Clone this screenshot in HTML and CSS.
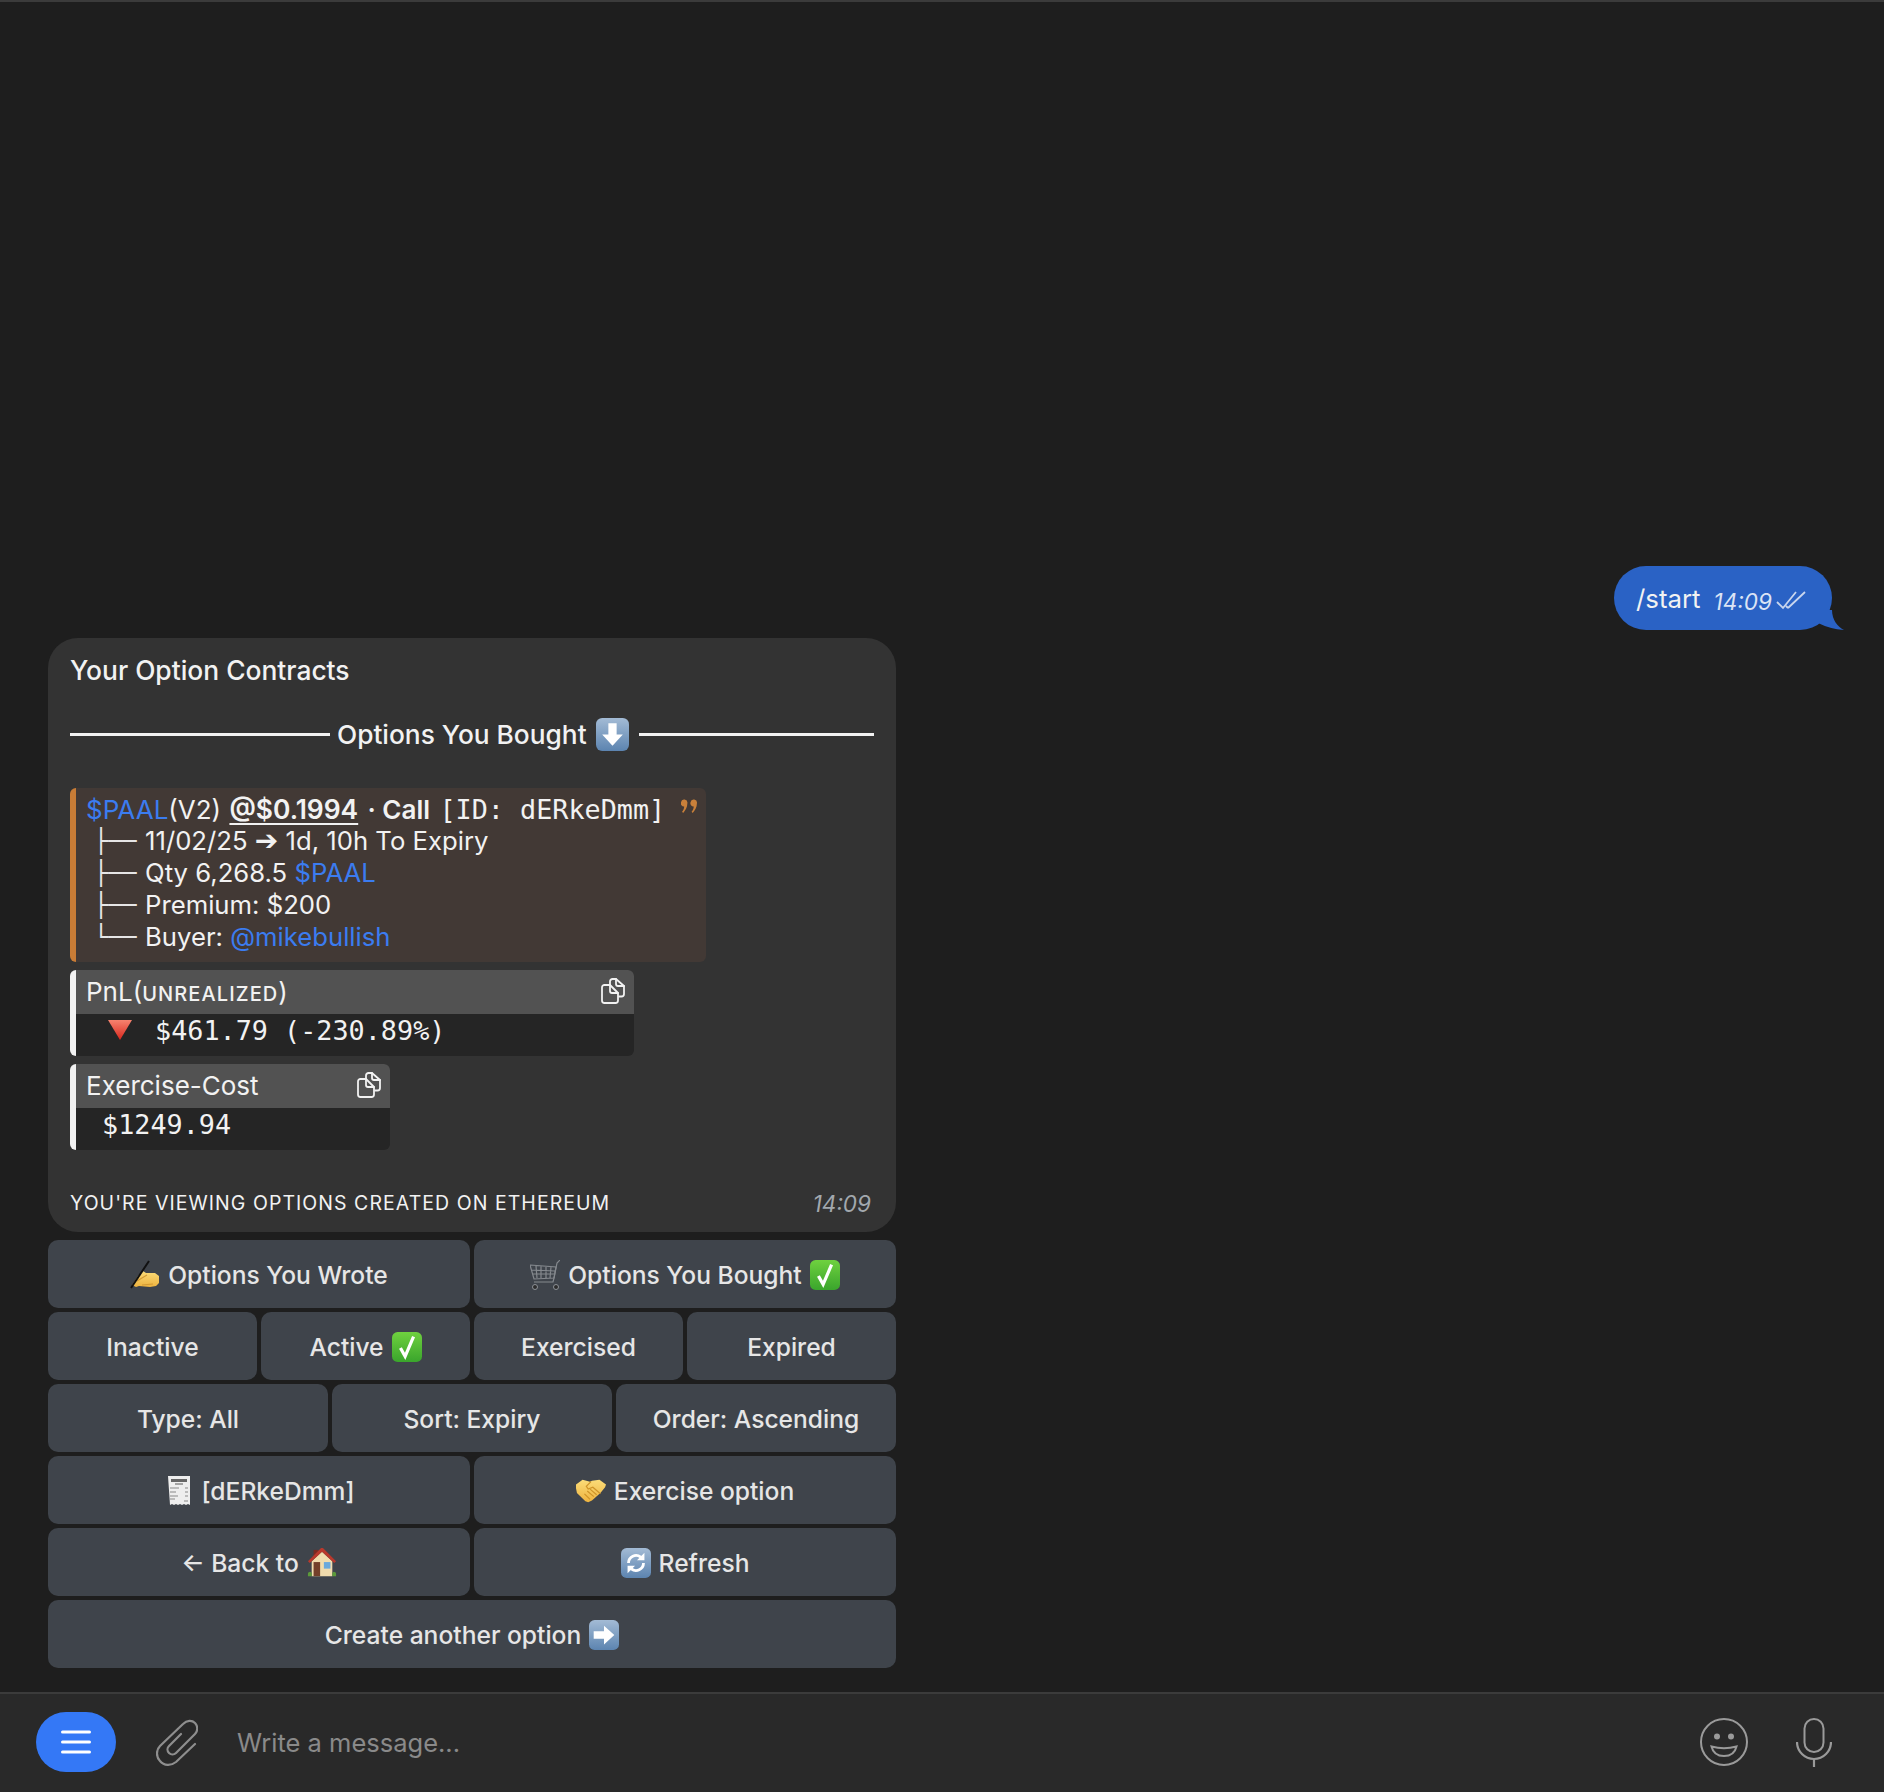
FILE: index.html
```html
<!DOCTYPE html>
<html lang="en">
<head>
    <meta charset="UTF-8">
    <title>Your Option Contracts</title>
    <link rel="stylesheet" href="styles.css">
</head>
<body>
    <svg class="sprite" width="0" height="0">
        <defs>
            <linearGradient id="keycap" x1="0" y1="0" x2="0" y2="1">
                <stop offset="0" stop-color="#a3bbd5"/>
                <stop offset="1" stop-color="#5c84b0"/>
            </linearGradient>
            <linearGradient id="green" x1="0" y1="0" x2="0" y2="1">
                <stop offset="0" stop-color="#6fd13f"/>
                <stop offset="1" stop-color="#3aa52c"/>
            </linearGradient>
            <linearGradient id="red" x1="0" y1="0" x2="0" y2="1">
                <stop offset="0" stop-color="#f6836f"/>
                <stop offset="1" stop-color="#d8261c"/>
            </linearGradient>
            <linearGradient id="skin" x1="0" y1="0" x2="0" y2="1">
                <stop offset="0" stop-color="#fbdc78"/>
                <stop offset="1" stop-color="#eeb33f"/>
            </linearGradient>
            <symbol id="e-down" viewBox="0 0 32 32">
                <rect width="32" height="32" rx="6" fill="url(#keycap)"/>
                <path d="M12 5h8v11h6L16 27 6 16h6z" fill="#fff"/>
            </symbol>
            <symbol id="e-right" viewBox="0 0 32 32">
                <rect width="32" height="32" rx="6" fill="url(#keycap)"/>
                <path d="M5 12h11V6l11 10-11 10v-6H5z" fill="#fff"/>
            </symbol>
            <symbol id="e-refresh" viewBox="0 0 32 32">
                <rect width="32" height="32" rx="6" fill="url(#keycap)"/>
                <path d="M8 16a8 8 0 0 1 13-6.200M24 16a8 8 0 0 1-13 6.200" fill="none" stroke="#fff" stroke-width="3"/>
                <path d="M25 5v8h-8zM7 27v-8h8z" fill="#fff"/>
            </symbol>
            <symbol id="e-check" viewBox="0 0 32 32">
                <rect width="32" height="32" rx="6" fill="url(#green)"/>
                <path d="M9 17l5 9L23 5" fill="none" stroke="#fff" stroke-width="3.400"/>
            </symbol>
            <symbol id="e-hand" viewBox="0 0 30 30">
                <path d="M2 25l6-9 5-5 3 2 9 0 4 3 0 7-3 3-6 1-11-1-3 1z" fill="url(#skin)"/>
                <path d="M7 21l10-6M12 25l11-1" fill="none" stroke="#d39a34" stroke-width="1.200"/>
                <path d="M1 28L19 1" fill="none" stroke="#111" stroke-width="2"/>
            </symbol>
            <symbol id="e-cart" viewBox="0 0 30 30">
                <g fill="none" stroke="#85898e" stroke-width="1.200">
                    <path d="M30 0l-3 3-3 15-1 4H4"/>
                    <path d="M0 5l26 2-2 11-20 1zM6 6l1 12M11 6v12M16 7v11M21 7l-1 11M1 10l24 1M2 14l22 0"/>
                </g>
                <circle cx="5" cy="27" r="2.500" fill="#2d2d2d" stroke="#8d9196"/>
                <circle cx="26" cy="27" r="2.500" fill="#2d2d2d" stroke="#8d9196"/>
            </symbol>
            <symbol id="e-receipt" viewBox="0 0 30 30">
                <path d="M4 0h22v29l-2-1-2 1-2-1-2 1-2-1-2 1-2-1-2 1-2-1-2 1z" fill="#eeeeee"/>
                <path d="M7 3h16v3H7z" fill="#666"/>
                <path d="M11 8h8" stroke="#888" stroke-width="1.500"/>
                <path d="M6 12h9M21 12h3M6 16h6M21 16h3M6 20h8M21 20h3M6 23h5M20 25h4" stroke="#888" stroke-width="1.200"/>
            </symbol>
            <symbol id="e-shake" viewBox="0 0 32 24">
                <path d="M0 5L7 0l8 2 2-1 8-1 7 5-1 3-5 6-9 8-4 2-3-1-9-9-1-5z" fill="url(#skin)"/>
                <path d="M16 2l-5 5 2 3 5-2 8 7M9 15l6 6M12 12l7 6M15 10l7 6" fill="none" stroke="#cf9428" stroke-width="1.300"/>
            </symbol>
            <symbol id="e-house" viewBox="0 0 30 32">
                <path d="M6 2h5v8H6z" fill="#7a2a22"/>
                <path d="M4 14L15 4l11 10v16H4z" fill="#f1dcae"/>
                <path d="M0 14L14 0h2l14 14-2 2L15 4 2 16z" fill="#b9382c"/>
                <path d="M6 15h7v15H6z" fill="#74402a"/>
                <path d="M17 15h7v7h-7z" fill="#6aa9dc"/>
                <path d="M0 28a2 2 0 0 1 4-1v3H0zM26 27a2 2 0 0 1 4 1v2h-4z" fill="#5c9a3a"/>
            </symbol>
            <symbol id="copy" viewBox="0 0 24 26">
                <g fill="none" stroke="#f2f2f2" stroke-width="1.800" stroke-linejoin="round" stroke-linecap="round">
                    <path d="M9 7V3.500A2.500 2.500 0 0 1 11.500 1H15l8 7v8a2.500 2.500 0 0 1-2.500 2.500H18"/>
                    <path d="M15 1v5a2 2 0 0 0 2 2h6"/>
                    <path d="M3.500 7H9l8 8v7.500a2.500 2.500 0 0 1-2.500 2.500h-11A2.500 2.500 0 0 1 1 22.500v-13A2.500 2.500 0 0 1 3.500 7z"/>
                    <path d="M9 7v6a2 2 0 0 0 2 2h6"/>
                </g>
            </symbol>
        </defs>
    </svg>

    <main class="chat">
        <div class="out-msg">
            <span class="out-text">/start</span>
            <span class="out-time">14:09</span>
            <svg class="ticks" viewBox="0 0 30 20">
                <path d="M1 12l6 6L20 2M12 18L29 2M10 16l2 2" fill="none" stroke="#c9d6ee" stroke-width="1.800"/>
            </svg>
            <svg class="tail" viewBox="0 0 30 20"><path d="M4 13Q16 19 30 20C24 17 18 10 18 0L4 0Z" fill="#2a62c5"/></svg>
        </div>

        <div class="in-msg">
            <div class="line title">Your Option Contracts</div>
            <div class="divider">
                <span class="rule rule-left"></span>
                <span class="divider-label">Options You Bought</span>
                <svg class="emoji-big"><use href="#e-down"/></svg>
                <span class="rule"></span>
            </div>

            <blockquote class="quote">
                <div class="line"><span class="link">$PAAL</span>(V2) <strong class="price">@$0.1994</strong> <strong class="call">· Call</strong> <code class="quote-id">[ID: dERkeDmm]</code></div>
                <div class="line tree"><span class="branch">├──</span>11/02/25 <strong class="arrow">➔</strong> 1d, 10h To Expiry</div>
                <div class="line tree"><span class="branch">├──</span>Qty 6,268.5&nbsp;<span class="link">$PAAL</span></div>
                <div class="line tree"><span class="branch">├──</span>Premium: $200</div>
                <div class="line tree"><span class="branch">└──</span>Buyer:&nbsp;<span class="link">@mikebullish</span></div>
                <svg class="quote-mark" viewBox="0 0 16 14"><path d="M0 3a3 3 0 1 1 6 1c0 4-2 7-4 9l-1-1c1-1 2-3 2-5a3 3 0 0 1-3-4zM9 3a3 3 0 1 1 6 1c0 4-2 7-4 9l-1-1c1-1 2-3 2-5a3 3 0 0 1-3-4z" fill="#c9803a"/></svg>
            </blockquote>

            <section class="pre pre-pnl">
                <header class="pre-head">
                    <span>PnL(<span class="smallcaps">unrealized</span>)</span>
                    <svg class="copy-icon"><use href="#copy"/></svg>
                </header>
                <div class="pre-body">
                    <svg class="tri" viewBox="0 0 24 20"><path d="M0 0h24L12 20z" fill="url(#red)"/></svg>
                    <code>$461.79 (-230.89%)</code>
                </div>
            </section>

            <section class="pre pre-cost">
                <header class="pre-head">
                    <span>Exercise-Cost</span>
                    <svg class="copy-icon"><use href="#copy"/></svg>
                </header>
                <div class="pre-body"><code>$1249.94</code></div>
            </section>

            <div class="msg-foot">
                <span class="foot-note">YOU'RE VIEWING OPTIONS CREATED ON ETHEREUM</span>
                <span class="in-time">14:09</span>
            </div>
        </div>

        <div class="keyboard">
            <div class="kb-row">
                <button class="kb-btn"><svg class="emoji"><use href="#e-hand"/></svg>Options You Wrote</button>
                <button class="kb-btn"><svg class="emoji"><use href="#e-cart"/></svg>Options You Bought<svg class="emoji"><use href="#e-check"/></svg></button>
            </div>
            <div class="kb-row">
                <button class="kb-btn">Inactive</button>
                <button class="kb-btn">Active<svg class="emoji"><use href="#e-check"/></svg></button>
                <button class="kb-btn">Exercised</button>
                <button class="kb-btn">Expired</button>
            </div>
            <div class="kb-row">
                <button class="kb-btn">Type: All</button>
                <button class="kb-btn">Sort: Expiry</button>
                <button class="kb-btn">Order: Ascending</button>
            </div>
            <div class="kb-row">
                <button class="kb-btn"><svg class="emoji"><use href="#e-receipt"/></svg>[dERkeDmm]</button>
                <button class="kb-btn"><svg class="emoji"><use href="#e-shake"/></svg>Exercise option</button>
            </div>
            <div class="kb-row">
                <button class="kb-btn">← Back to<svg class="emoji"><use href="#e-house"/></svg></button>
                <button class="kb-btn"><svg class="emoji"><use href="#e-refresh"/></svg>Refresh</button>
            </div>
            <div class="kb-row">
                <button class="kb-btn">Create another option<svg class="emoji"><use href="#e-right"/></svg></button>
            </div>
        </div>
    </main>

    <footer class="composer">
        <button class="menu-btn">
            <svg width="30" height="24" viewBox="0 0 30 24"><path d="M1.500 2h27M1.500 12h27M1.500 22h27" stroke="#fff" stroke-width="3" stroke-linecap="round"/></svg>
        </button>
        <svg class="clip" width="42" height="47" viewBox="0 0 42 47">
            <path d="M39 25L20 43c-5 4-12 4-16-1-4-4-4-11 0-15L27 5c4-4 9-4 12-1s3 8 0 11L20 34c-2 2-5 2-7 0s-2-5 0-7l12-12" fill="none" stroke="#8e8e8e" stroke-width="2.200" stroke-linecap="round"/>
        </svg>
        <span class="placeholder">Write a message...</span>
        <svg class="smile" width="48" height="48" viewBox="0 0 48 48">
            <circle cx="24" cy="24" r="23" fill="none" stroke="#9a9a9a" stroke-width="2"/>
            <circle cx="17" cy="18.500" r="3" fill="#9a9a9a"/>
            <circle cx="31" cy="18.500" r="3" fill="#9a9a9a"/>
            <path d="M11.500 28.500Q24 32 36.500 28.500C35 35 30 38 24 38S13 35 11.500 28.500z" fill="none" stroke="#9a9a9a" stroke-width="2"/>
        </svg>
        <svg class="mic" width="36" height="49" viewBox="0 0 36 49">
            <rect x="8.500" y="1" width="19" height="33" rx="9.500" fill="none" stroke="#9a9a9a" stroke-width="2"/>
            <path d="M1 24a17 17 0 0 0 34 0M18 41v8" fill="none" stroke="#9a9a9a" stroke-width="2.200"/>
        </svg>
    </footer>
</body>
</html>
```

FILE: styles.css
```css
* {
    box-sizing: border-box;
}

html, body {
    margin: 0;
    height: 1792px;
    overflow: hidden;
}

body {
    display: flex;
    flex-direction: column;
    background-color: #1e1e1e;
    border-top: 2px solid #3b3b3b;
    font-family: Inter, "Noto Sans", sans-serif;
    color: #f2f2f2;
}

.sprite {
    position: absolute;
}

code {
    font-family: "DejaVu Sans Mono", monospace;
    font-size: 26.800px;
    font-weight: 400;
}

.chat {
    flex: 1;
    display: flex;
    flex-direction: column;
    justify-content: flex-end;
    padding: 0 52px 24px 48px;
}

/* outgoing */
.out-msg {
    position: relative;
    align-self: flex-end;
    display: flex;
    align-items: center;
    width: 218px;
    height: 64px;
    margin-bottom: 8px;
    padding: 0 0 0 22px;
    background-color: #2a62c5;
    border-radius: 32px;
}

.out-text {
    font-size: 25.800px;
    margin-right: 13px;
    margin-top: 1px;
}

.out-time {
    font-size: 22.500px;
    font-style: italic;
    color: #dbe4f5;
    margin-right: 4px;
    margin-top: 6px;
}

.ticks {
    width: 30px;
    height: 20px;
    margin-top: 4px;
}

.tail {
    position: absolute;
    right: -12px;
    bottom: 0;
    width: 30px;
    height: 20px;
}

/* incoming */
.in-msg {
    width: 848px;
    height: 594px;
    padding: 16px 22px 0;
    background-color: #333333;
    border-radius: 30px;
}

.line {
    height: 32px;
    line-height: 32px;
    font-size: 26px;
    white-space: nowrap;
}

.title {
    font-size: 26.400px;
    font-weight: 500;
}

.divider {
    display: flex;
    align-items: center;
    height: 32px;
    margin-top: 32px;
    font-size: 26.300px;
    font-weight: 500;
}

.rule {
    flex: 1;
    height: 3px;
    background-color: #f2f2f2;
}

.rule-left {
    flex: none;
    width: 260px;
}

.divider-label {
    margin: 0 9px 0 7px;
}

.emoji-big {
    width: 33px;
    height: 33px;
    margin-right: 10px;
}

.quote {
    position: relative;
    width: 636px;
    height: 174px;
    margin: 38px 0 8px;
    padding: 5px 0 0 10px;
    background-color: #423935;
    border-left: 6px solid #c87c36;
    border-radius: 6px;
}

.link {
    color: #3b7cf0;
}

.price {
    margin-left: 1px;
    font-size: 26.400px;
    text-decoration: underline;
    text-decoration-thickness: 2px;
    text-underline-offset: 4px;
}

.call {
    margin-left: 2px;
}

.quote-id {
    margin-left: 2px;
}

strong {
    font-weight: 600;
}

.tree {
    display: flex;
    white-space: pre;
    align-items: center;
    padding-left: 8px;
    font-size: 25.700px;
}

.arrow {
    margin: 0;
    font-family: "DejaVu Sans", sans-serif;
    font-size: 28px;
}

.branch {
    width: 51px;
    font-family: "DejaVu Sans Mono", monospace;
    font-size: 23.500px;
    color: #e6e6e6;
}

.quote-mark {
    position: absolute;
    top: 11px;
    right: 8px;
    width: 17px;
    height: 15px;
}

.pre {
    overflow: hidden;
    height: 86px;
    margin-bottom: 8px;
    background-color: #252525;
    border-left: 6px solid #f2f2f2;
    border-radius: 6px;
}

.pre-pnl {
    width: 564px;
}

.pre-cost {
    width: 320px;
    margin-bottom: 0;
}

.pre-head {
    display: flex;
    justify-content: space-between;
    align-items: center;
    height: 44px;
    padding: 0 9px 2px 10px;
    background-color: #525252;
    font-size: 26px;
}

.smallcaps {
    font-size: 20px;
    font-weight: 500;
    letter-spacing: 1.100px;
    text-transform: uppercase;
}

.copy-icon {
    width: 24px;
    height: 26px;
}

.pre-body {
    display: flex;
    align-items: center;
    height: 32px;
    padding-left: 26px;
}

.tri {
    width: 24px;
    height: 20px;
    margin-left: 6px;
    margin-right: 23px;
}

.msg-foot {
    display: flex;
    justify-content: space-between;
    align-items: center;
    height: 32px;
    margin-top: 37px;
    padding-right: 3px;
}

.foot-note {
    font-size: 19.500px;
    letter-spacing: 1.050px;
}

.in-time {
    font-size: 22.500px;
    font-style: italic;
    color: #a2a8ae;
}

/* inline keyboard */
.keyboard {
    display: flex;
    flex-direction: column;
    gap: 4px;
    width: 848px;
    margin-top: 8px;
}

.kb-row {
    display: flex;
    gap: 4px;
}

.kb-btn {
    flex: 1 1 0;
    display: flex;
    justify-content: center;
    align-items: center;
    gap: 8px;
    height: 68px;
    padding: 2px 0 0;
    border: none;
    border-radius: 10px;
    background-color: #3f444b;
    color: #e6e6e6;
    font-family: inherit;
    font-size: 24.600px;
    font-weight: 500;
    white-space: nowrap;
}

.emoji {
    width: 30px;
    height: 30px;
    flex: none;
}

/* composer */
.composer {
    display: flex;
    align-items: center;
    height: 100px;
    padding: 0 36px 2px;
    background-color: #292929;
    border-top: 2px solid #3b3b3b;
}

.menu-btn {
    display: flex;
    justify-content: center;
    align-items: center;
    width: 80px;
    height: 60px;
    padding: 0;
    border: none;
    border-radius: 30px;
    background-color: #3478f6;
}

.clip {
    margin-left: 40px;
}

.placeholder {
    flex: 1;
    margin-left: 39px;
    font-size: 25.500px;
    color: #8a8a8a;
}

.mic {
    margin-left: 48px;
    margin-right: 16px;
}
```
